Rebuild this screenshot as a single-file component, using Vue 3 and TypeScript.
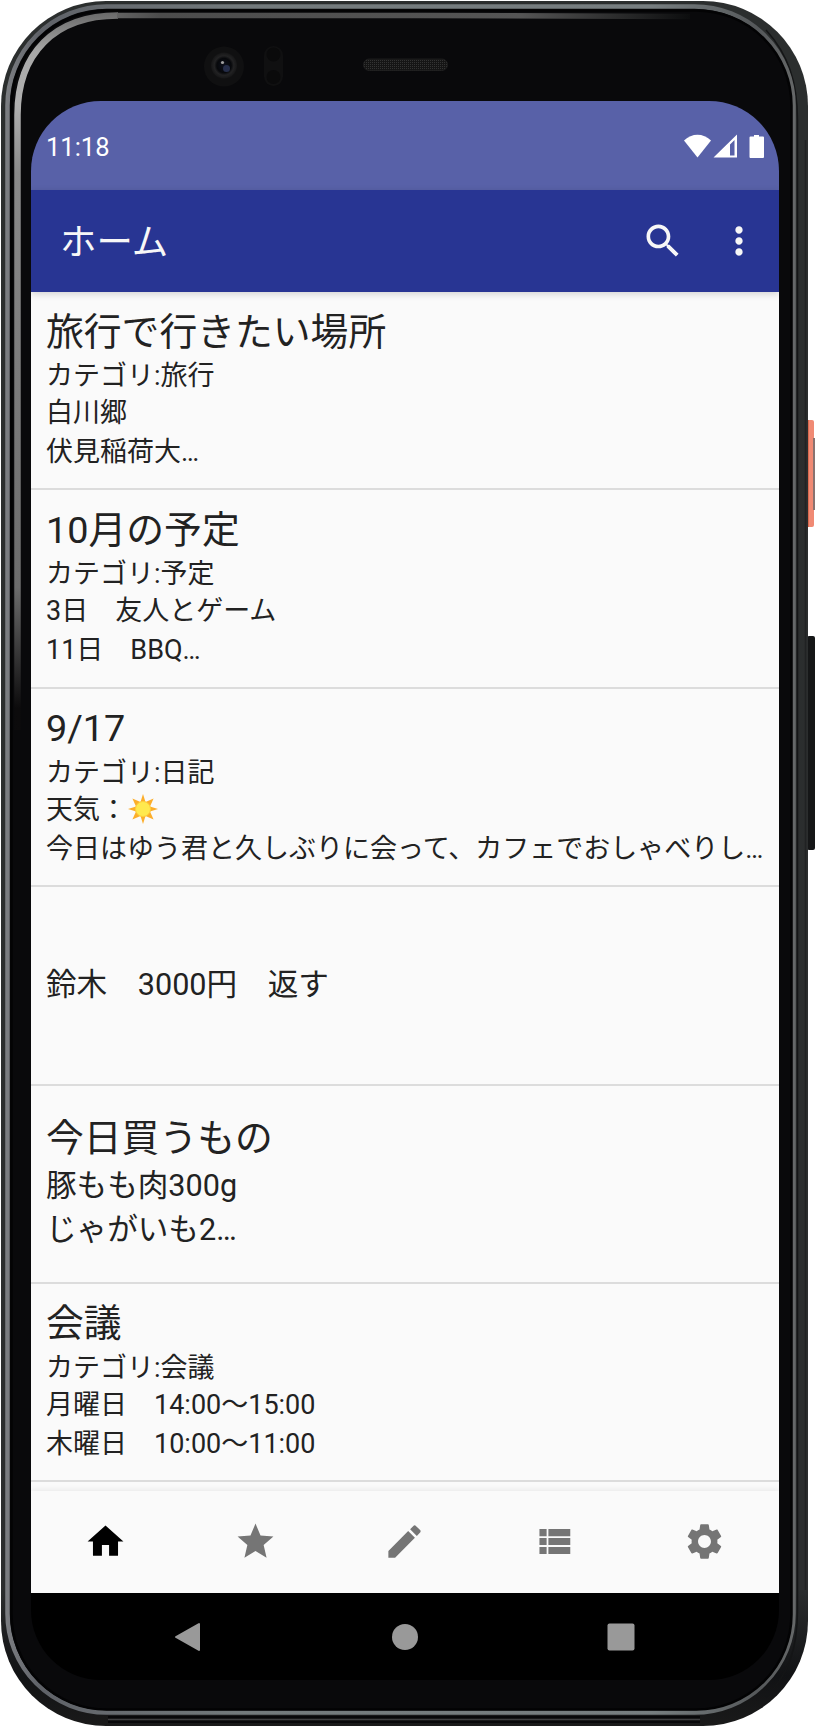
<script setup lang="ts">
interface Memo {
  title?: string
  category?: string
  lines: string[]
  sun?: boolean
  size: 'small' | 'large'
}

const memos: Memo[] = [
  { title: '旅行で行きたい場所', category: '旅行', lines: ['白川郷', '伏見稲荷大…'], size: 'small' },
  { title: '10月の予定', category: '予定', lines: ['3日　友人とゲーム', '11日　BBQ…'], size: 'small' },
  {
    title: '9/17',
    category: '日記',
    lines: ['天気：', '今日はゆう君と久しぶりに会って、カフェでおしゃべりし…'],
    sun: true,
    size: 'small',
  },
  { lines: ['鈴木　3000円　返す'], size: 'large' },
  { title: '今日買うもの', lines: ['豚もも肉300g', 'じゃがいも2…'], size: 'large' },
  { title: '会議', category: '会議', lines: ['月曜日　14:00〜15:00', '木曜日　10:00〜11:00'], size: 'small' },
]

const tabs: { name: string; path: string; active?: boolean }[] = [
  { name: 'home', path: 'M10 20v-6h4v6h5v-8h3L12 3 2 12h3v8z', active: true },
  { name: 'star', path: 'M12 17.27L18.18 21l-1.64-7.03L22 9.24l-7.19-.61L12 2 9.19 8.63 2 9.24l5.46 4.73L5.82 21z' },
  {
    name: 'edit',
    path: 'M3 17.25V21h3.75L17.81 9.94l-3.75-3.75L3 17.25zM20.71 7.04c.39-.39.39-1.02 0-1.41l-2.34-2.34c-.39-.39-1.02-.39-1.41 0l-1.83 1.83 3.75 3.75 1.83-1.83z',
  },
  { name: 'list', path: 'M3.600 14h4v-4h-4v4zm0 5h4v-4h-4v4zm0-10h4V5h-4v4zm5 5h12.200v-4H8.600v4zm0 5h12.200v-4H8.600v4zM8.600 5v4h12.200V5H8.600z' },
  {
    name: 'settings',
    path: 'M19.14 12.94c.04-.3.06-.61.06-.94 0-.32-.02-.64-.07-.94l2.03-1.58c.18-.14.23-.41.12-.61l-1.92-3.32c-.12-.22-.37-.29-.59-.22l-2.39.96c-.5-.38-1.03-.7-1.62-.94l-.36-2.54c-.04-.24-.24-.41-.48-.41h-3.84c-.24 0-.43.17-.47.41l-.36 2.54c-.59.24-1.13.57-1.62.94l-2.39-.96c-.22-.08-.47 0-.59.22L2.74 8.87c-.12.21-.08.47.12.61l2.03 1.58c-.05.3-.09.63-.09.94s.02.64.07.94l-2.03 1.58c-.18.14-.23.41-.12.61l1.92 3.32c.12.22.37.29.59.22l2.39-.96c.5.38 1.03.7 1.62.94l.36 2.54c.05.24.24.41.48.41h3.84c.24 0 .44-.17.47-.41l.36-2.54c.59-.24 1.13-.56 1.62-.94l2.39.96c.22.08.47 0 .59-.22l1.92-3.32c.12-.22.07-.47-.12-.61l-2.01-1.58zM12 15.6c-1.98 0-3.6-1.62-3.6-3.6s1.62-3.6 3.6-3.6 3.6 1.62 3.6 3.6-1.62 3.6-3.6 3.6z',
  },
]
</script>

<template>
  <div class="stage">
    <svg class="frame" viewBox="0 0 815 1727" aria-hidden="true">
      <defs>
        <linearGradient id="glint" gradientUnits="userSpaceOnUse" x1="0" y1="0" x2="0" y2="1727">
          <stop offset="0" stop-color="#555" />
          <stop offset="0.03" stop-color="#a8a8a8" />
          <stop offset="0.06" stop-color="#b0b0b0" />
          <stop offset="0.1" stop-color="#8a8a8a" />
          <stop offset="0.34" stop-color="#6c6c6c" />
          <stop offset="0.41" stop-color="#0c0b0c" />
          <stop offset="1" stop-color="#060607" />
        </linearGradient>
        <linearGradient id="topglint" gradientUnits="userSpaceOnUse" x1="100" y1="0" x2="700" y2="0">
          <stop offset="0" stop-color="#6b6b6b" />
          <stop offset="0.1" stop-color="#4c4c4c" />
          <stop offset="0.7" stop-color="#555" />
          <stop offset="1" stop-color="#08090a" />
        </linearGradient>
        <linearGradient id="rim" gradientUnits="userSpaceOnUse" x1="0" y1="0" x2="815" y2="0">
          <stop offset="0" stop-color="#808286" />
          <stop offset="0.05" stop-color="#5f6268" />
          <stop offset="0.3" stop-color="#737a7c" />
          <stop offset="0.8" stop-color="#777e80" />
          <stop offset="0.93" stop-color="#55585a" />
          <stop offset="1" stop-color="#6e7070" />
        </linearGradient>
        <linearGradient id="body" gradientUnits="userSpaceOnUse" x1="0" y1="0" x2="0" y2="1727">
          <stop offset="0" stop-color="#2b2e2e" />
          <stop offset="0.92" stop-color="#2b2d2e" />
          <stop offset="0.97" stop-color="#111214" />
          <stop offset="1" stop-color="#1a1a1a" />
        </linearGradient>
        <radialGradient id="lens">
          <stop offset="0" stop-color="#0d111d" />
          <stop offset="0.55" stop-color="#07080b" />
          <stop offset="0.75" stop-color="#222223" />
          <stop offset="1" stop-color="#161617" />
        </radialGradient>
        <pattern id="mesh" width="2" height="2" patternUnits="userSpaceOnUse">
          <rect width="2" height="2" fill="#151515" />
          <rect width="1" height="1" fill="#333" />
        </pattern>
      </defs>
      <rect x="807" y="420" width="7" height="107" rx="2" fill="#f08a74" />
      <rect x="807" y="420" width="2" height="107" fill="#d96a4f" />
      <rect x="813" y="438" width="2" height="72" fill="#8a7370" />
      <rect x="807" y="636" width="8" height="214" rx="2" fill="#151617" />
      <rect x="1" y="1" width="807" height="1725" rx="105" fill="url(#body)" />
      <path d="M766 30C788 54 797.500 82 797.500 120V1610C797.500 1650 788 1675 766 1697" fill="none" stroke="#141516" stroke-width="1.500" />
      <path d="M805.500 140V1590" stroke="#202223" stroke-width="1.500" />
      <path d="M108 1719.500H700" stroke="#3f3f41" stroke-width="1" />
      <path d="M108 1717H700M108 1722H700" stroke="#08080a" stroke-width="2" />
      <rect x="7.500" y="6.500" width="786" height="1706" rx="99" fill="#09090b" stroke="url(#rim)" stroke-width="4.500" />
      <rect x="11.500" y="10.500" width="780" height="1699" rx="95" fill="#09090b" stroke="#030304" stroke-width="2.500" />
      <path d="M17.500 730V115C17.500 54 54 15.500 118 15.500" fill="none" stroke="url(#glint)" stroke-width="6.500" />
      <path d="M117 15.500H420L690 16.500" fill="none" stroke="url(#topglint)" stroke-width="5.500" />
      <circle cx="224" cy="66.500" r="20" fill="#101011" />
      <circle cx="224" cy="65.500" r="13" fill="url(#lens)" />
      <circle cx="226.500" cy="68.500" r="3.500" fill="#252d49" />
      <circle cx="222.500" cy="62.500" r="1.600" fill="#a0a0a0" />
      <rect x="264" y="46" width="19" height="40" rx="9.500" fill="#101011" />
      <circle cx="273.500" cy="54.500" r="7" fill="#0a0a0b" />
      <circle cx="273.500" cy="77" r="7" fill="#0a0a0b" />
      <rect x="363.500" y="59" width="84" height="11.500" rx="5.700" fill="url(#mesh)" stroke="#222" stroke-width="0.800" />
    </svg>

    <main class="screen">
      <header class="status">
        <span class="clock">11:18</span>
        <svg class="status-icons" viewBox="0 0 82 26" aria-hidden="true">
          <path d="M0 6.500C8-1.200 19-1.200 27 6.500L13.500 23.500z" fill="#fff" />
          <path d="M29.500 23.500L53 .500V23.500zM46 10.500V21.500H50.500V6z" fill="#fff" fill-rule="evenodd" />
          <path d="M70 1H75V2.500H79Q80 2.500 80 3.500V23Q80 24 79 24H66.500Q65.500 24 65.500 23V3.500Q65.500 2.500 66.500 2.500H70z" fill="#fff" />
        </svg>
      </header>

      <div class="appbar">
        <h1>ホーム</h1>
        <div class="actions">
          <svg viewBox="0 0 24 24" aria-hidden="true">
            <path d="M15.500 14h-.79l-.28-.27C15.410 12.590 16 11.110 16 9.500 16 5.910 13.090 3 9.500 3S3 5.910 3 9.500 5.910 16 9.500 16c1.610 0 3.090-.59 4.230-1.570l.27.28v.79l5 4.990L20.490 19l-4.990-5zm-6 0C7.010 14 5 11.990 5 9.500S7.010 5 9.500 5 14 7.010 14 9.500 11.990 14 9.500 14z" />
          </svg>
          <svg viewBox="0 0 24 24" aria-hidden="true">
            <path d="M12 8c1.100 0 2-.9 2-2s-.9-2-2-2-2 .9-2 2 .9 2 2 2zm0 2c-1.100 0-2 .9-2 2s.9 2 2 2 2-.9 2-2-.9-2-2-2zm0 6c-1.100 0-2 .9-2 2s.9 2 2 2 2-.9 2-2-.9-2-2-2z" />
          </svg>
        </div>
      </div>

      <ul class="list">
        <li v-for="(memo, i) in memos" :key="i" class="memo" :class="memo.size">
          <h2 v-if="memo.title">{{ memo.title }}</h2>
          <p v-if="memo.category" class="category">カテゴリ:{{ memo.category }}</p>
          <p v-for="(line, j) in memo.lines" :key="j" class="line">
            <span>{{ line }}</span>
            <svg v-if="memo.sun && j === 0" class="sun" viewBox="0 0 30 30" aria-hidden="true">
              <path
                d="M15 0L17.500 8L25.600 4.400L22 12.500L30 15L22 17.500L25.600 25.600L17.500 22L15 30L12.500 22L4.400 25.600L8 17.500L0 15L8 12.500L4.400 4.400L12.500 8z"
                fill="#fcae2b"
              />
              <circle cx="15" cy="15" r="7.500" fill="#ffe94f" stroke="#fdd03c" stroke-width="1" />
            </svg>
          </p>
        </li>
      </ul>

      <nav class="tabs">
        <span v-for="tab in tabs" :key="tab.name" class="tab" :class="{ active: tab.active }">
          <svg viewBox="0 0 24 24" aria-hidden="true"><path :d="tab.path" /></svg>
        </span>
      </nav>

      <footer class="system">
        <svg viewBox="0 0 30 30" aria-hidden="true">
          <path d="M3 15L26 2V28z" stroke-width="2" stroke-linejoin="round" stroke="#999" />
        </svg>
        <svg viewBox="0 0 30 30" aria-hidden="true"><circle cx="15" cy="15" r="13" /></svg>
        <svg viewBox="0 0 30 30" aria-hidden="true"><rect x="1.500" y="1.500" width="27" height="27" rx="2" /></svg>
      </footer>
    </main>
  </div>
</template>

<style>
body {
  background: #fff;
}
</style>

<style scoped>
.stage {
  position: relative;
  box-sizing: border-box;
  width: 815px;
  height: 1727px;
  padding: 101px 36px 47px 31px;
  overflow: hidden;
  font-family: Roboto, 'Noto Sans CJK JP', sans-serif;
  color: #222;
}

.frame {
  position: absolute;
  inset: 0;
  width: 815px;
  height: 1727px;
}

.screen {
  position: relative;
  display: flex;
  flex-direction: column;
  width: 748px;
  height: 1579px;
  overflow: hidden;
  border-radius: 70px;
}

.status {
  display: flex;
  flex: none;
  align-items: flex-start;
  justify-content: space-between;
  height: 89px;
  padding: 0 13px 0 15px;
  box-sizing: border-box;
  background: #5861a8;
  color: #fff;
}

.clock {
  margin-top: 31px;
  font-size: 25.5px;
  line-height: 30px;
}

.status-icons {
  width: 82px;
  height: 26px;
  margin-top: 33px;
}

.appbar {
  position: relative;
  z-index: 1;
  display: flex;
  flex: none;
  align-items: center;
  justify-content: space-between;
  height: 102px;
  padding: 0 18px 0 29px;
  box-sizing: border-box;
  background: #283593;
  box-shadow: 0 2px 7px rgb(0 0 0 / 16%);
}

h1 {
  margin: 3px 0 0;
  color: #f7f7f7;
  font-size: 36.4px;
  font-weight: 400;
  line-height: 44px;
}

.actions {
  display: flex;
  gap: 32.5px;
}

.actions svg {
  width: 44px;
  height: 44px;
  fill: #f7f7f7;
}

.list {
  flex: 1;
  min-height: 0;
  margin: 0;
  padding: 0;
  background: #fafafa;
  list-style: none;
}

.memo {
  display: flex;
  flex-direction: column;
  justify-content: center;
  box-sizing: border-box;
  height: 198.4px;
  padding: 0 15px;
  border-bottom: 2px solid #dcdcdc;
}

.memo.small {
  padding-top: 1.2px;
}

h2 {
  margin: 0;
  font-size: 37.8px;
  font-weight: 400;
  line-height: 44px;
  white-space: nowrap;
}

p {
  display: flex;
  align-items: center;
  margin: 0;
  white-space: nowrap;
}

.category {
  margin-top: 5.5px;
  font-size: 27px;
  line-height: 35px;
}

.small .line {
  font-size: 27px;
  line-height: 39px;
}

.large .line {
  font-size: 30.6px;
  line-height: 44px;
}

.large h2 + .line {
  margin-top: 4.5px;
}

.line:only-child {
  margin-bottom: 0.5px;
}

.sun {
  width: 30px;
  height: 30px;
  margin: 0 0 2px 1px;
}

.tabs {
  display: flex;
  flex: none;
  height: 102px;
  padding-bottom: 2px;
  box-sizing: border-box;
  background: #fafafa;
  box-shadow: 0 -1px 6px rgb(0 0 0 / 8%);
}

.tab {
  display: flex;
  flex: 1;
  align-items: center;
  justify-content: center;
  fill: #757575;
}

.tab.active {
  fill: #000;
}

.tab svg {
  width: 43px;
  height: 43px;
}

.system {
  display: flex;
  flex: none;
  align-items: center;
  justify-content: space-between;
  height: 87px;
  padding: 0 143px 0 142px;
  box-sizing: border-box;
  background: #000;
}

.system svg {
  width: 30px;
  height: 30px;
  fill: #999;
}
</style>
